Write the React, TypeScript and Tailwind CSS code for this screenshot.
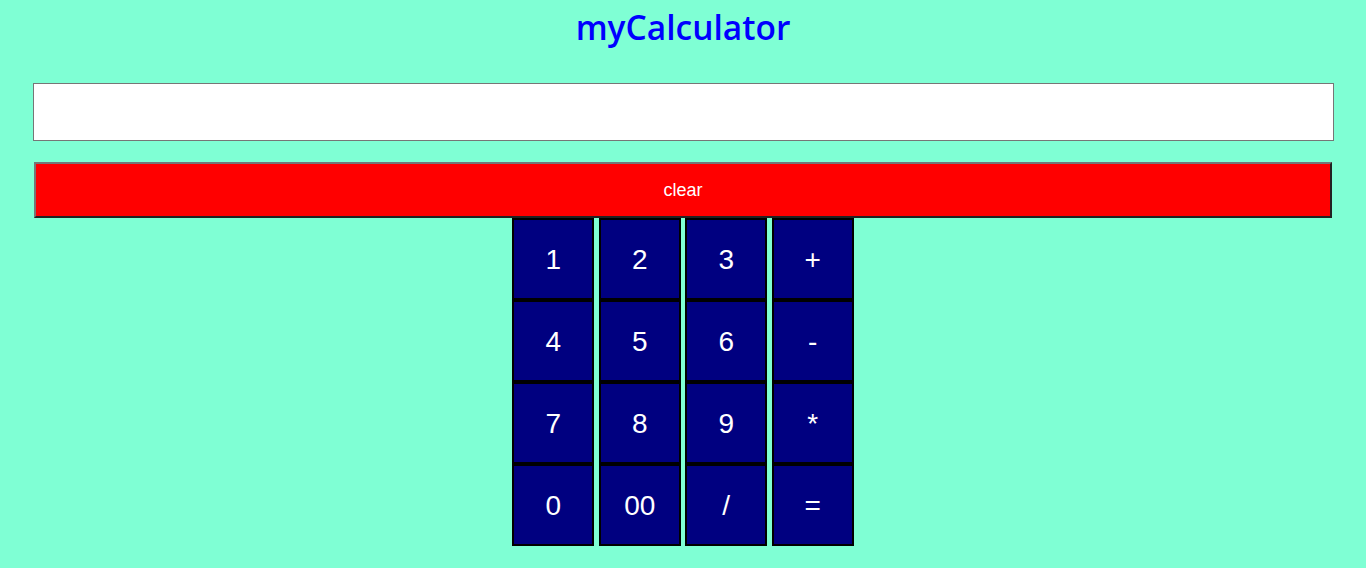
import React from "react";

const rows = [
  ["1", "2", "3", "+"],
  ["4", "5", "6", "-"],
  ["7", "8", "9", "*"],
  ["0", "00", "/", "="],
];

export default function App() {
  return (
    <div className="min-h-[568px] w-full bg-[#7fffd4]">
      <h1
        className="flex h-[54px] items-center justify-center text-[33.5px] font-semibold text-[#0000ff]"
        style={{ fontFamily: '"Open Sans", "Noto Sans", sans-serif' }}
      >
        myCalculator
      </h1>
      <div className="flex justify-center pt-[29px]">
        <input
          type="text"
          className="h-[58px] w-[1301px] border border-[#767676] bg-white"
        />
      </div>
      <div className="flex justify-center pt-[21px]">
        <button
          className="h-[56px] w-[1298px] border-2 border-t-[#767676] border-l-[#767676] border-b-[#222] border-r-[#222] bg-[#ff0000] pt-[1px] text-[18px] text-white"
          style={{ fontFamily: '"Liberation Sans", Arial, sans-serif' }}
        >
          clear
        </button>
      </div>
      <div className="flex flex-col items-center">
        {rows.map((row, i) => (
          <div key={i} className="flex gap-[4.45px]">
            {row.map((k) => (
              <button
                key={k}
                className="flex h-[82px] w-[82px] items-center justify-center border-2 border-black bg-[#000080] pt-[2px] text-[28px] text-white"
                style={{ fontFamily: '"Liberation Sans", Arial, sans-serif' }}
              >
                {k}
              </button>
            ))}
          </div>
        ))}
      </div>
    </div>
  );
}
